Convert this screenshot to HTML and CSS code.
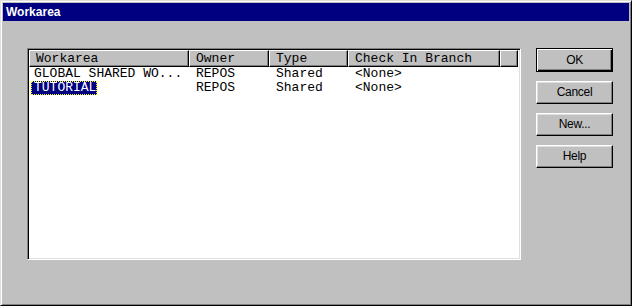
FILE: index.html
```html
<!DOCTYPE html>
<html>
<head>
<meta charset="utf-8">
<link rel="stylesheet" href="styles.css">
</head>
<body>
<div class="window">
  <div class="titlebar">Workarea</div>
  <div class="content">
    <div class="listview">
      <div class="header">
        <div class="hcell c1">Workarea</div>
        <div class="hcell c2">Owner</div>
        <div class="hcell c3">Type</div>
        <div class="hcell c4">Check In Branch</div>
        <div class="hcell c5"></div>
      </div>
      <div class="row">
        <div class="cell c1"><span class="item">GLOBAL SHARED WO...</span></div>
        <div class="cell c2">REPOS</div>
        <div class="cell c3">Shared</div>
        <div class="cell c4">&lt;None&gt;</div>
      </div>
      <div class="row">
        <div class="cell c1"><span class="item selected">TUTORIAL</span></div>
        <div class="cell c2">REPOS</div>
        <div class="cell c3">Shared</div>
        <div class="cell c4">&lt;None&gt;</div>
      </div>
    </div>
    <div class="buttons">
      <button class="btn default">OK</button>
      <button class="btn">Cancel</button>
      <button class="btn">New...</button>
      <button class="btn">Help</button>
    </div>
  </div>
</div>
</body>
</html>
```

FILE: styles.css
```css
html, body {
  margin: 0;
  padding: 0;
  background: #c0c0c0;
}
.window {
  width: 632px;
  height: 306px;
  box-sizing: border-box;
  border: 1px solid;
  border-color: #dfdfdf #000 #000 #dfdfdf;
  box-shadow: inset 1px 1px #fff, inset -1px -1px #808080;
  padding: 2px;
  background: #c0c0c0;
}
.titlebar {
  height: 18px;
  line-height: 18px;
  background: #000080;
  color: #fff;
  font-family: "Liberation Sans", Arial, sans-serif;
  font-weight: bold;
  font-size: 12px;
  padding-left: 3px;
}
.content {
  display: flex;
  align-items: flex-start;
  padding: 27px 0 0 24px;
  gap: 15px;
}
.listview {
  width: 494px;
  height: 212px;
  box-sizing: border-box;
  border: 1px solid;
  border-color: #808080 #fff #fff #808080;
  box-shadow: inset 1px 1px #000, inset -1px -1px #dfdfdf;
  padding: 1px;
  background: #fff;
  font-family: "Liberation Mono", "Courier New", monospace;
  font-size: 13px;
  color: #000;
}
.header {
  display: flex;
  height: 17px;
}
.hcell {
  box-sizing: border-box;
  height: 17px;
  background: #c0c0c0;
  border-top: 1px solid #fff;
  border-left: 1px solid #fff;
  border-right: 1px solid #000;
  border-bottom: 1px solid #000;
  box-shadow: inset -1px -1px #808080;
  padding: 1px 0 0 6px;
  line-height: 13px;
  white-space: nowrap;
  overflow: hidden;
}
.c1 { width: 160px; flex: none; }
.c2 { width: 80px; flex: none; }
.c3 { width: 79px; flex: none; }
.c4 { width: 152px; flex: none; }
.c5 { width: 18px; flex: none; }
.row {
  display: flex;
  height: 14px;
  line-height: 14px;
}
.cell {
  white-space: nowrap;
  padding-left: 7px;
  box-sizing: border-box;
}
.cell.c1 {
  padding-left: 2px;
}
.item {
  display: inline-block;
  height: 14px;
  box-sizing: border-box;
  padding: 0 1px 0 3px;
}
.item.selected {
  background: #000080;
  color: #fff;
  border: 1px dotted #ffff00;
  padding: 0 0 0 2px;
  line-height: 12px;
}
.buttons {
  display: flex;
  flex-direction: column;
  gap: 9px;
}
.btn {
  width: 77px;
  height: 23px;
  box-sizing: border-box;
  margin: 0;
  padding: 0;
  background: #c0c0c0;
  border: 1px solid;
  border-color: #fff #000 #000 #fff;
  box-shadow: inset -1px -1px #808080, inset 1px 1px #dfdfdf;
  font-family: "Liberation Sans", Arial, sans-serif;
  font-size: 12px;
  letter-spacing: -0.3px;
  color: #000;
  text-align: center;
  line-height: 19px;
}
.btn.default {
  height: 24px;
  border: 1px solid #000;
  box-shadow: inset 1px 1px #fff, inset -1px -1px #000, inset -2px -2px #808080;
}
```
